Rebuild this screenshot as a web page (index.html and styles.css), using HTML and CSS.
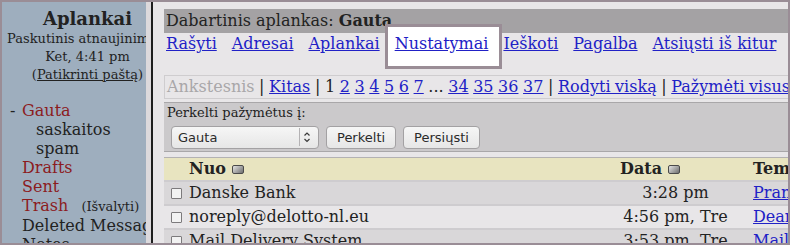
FILE: index.html
```html
<!DOCTYPE html>
<html lang="lt">
<head>
    <meta charset="UTF-8">
    <title>SquirrelMail - Gauta</title>
    <link rel="stylesheet" href="styles.css">
</head>
<body>
<div class="window">
    <aside class="sidebar">
        <div class="sidebar-inner">
            <h1 class="side-title">Aplankai</h1>
            <div class="refresh">
                Paskutinis atnaujinimas:<br>
                Ket, 4:41 pm<br>
                (<a href="#">Patikrinti paštą</a>)
            </div>
            <ul class="folders">
                <li class="folder special"><span class="dash">-</span><a href="#">Gauta</a></li>
                <li class="folder sub"><a href="#">saskaitos</a></li>
                <li class="folder sub"><a href="#">spam</a></li>
                <li class="folder special"><a href="#">Drafts</a></li>
                <li class="folder special"><a href="#">Sent</a></li>
                <li class="folder special"><a href="#">Trash</a><a class="purge" href="#">(Išvalyti)</a></li>
                <li class="folder"><a href="#">Deleted Messages</a></li>
                <li class="folder"><a href="#">Notes</a></li>
            </ul>
        </div>
    </aside>
    <div class="splitter"></div>
    <main class="main">
        <div class="current">Dabartinis aplankas: <b>Gauta</b></div>
        <nav class="menu">
            <a href="#">Rašyti</a>
            <a href="#">Adresai</a>
            <a href="#">Aplankai</a>
            <a href="#" class="active">Nustatymai</a>
            <a href="#">Ieškoti</a>
            <a href="#">Pagalba</a>
            <a href="#">Atsiųsti iš kitur</a>
            <a href="#">Organizatorius</a>
        </nav>

        <div class="paging">
            <span class="disabled">Ankstesnis</span> | <a href="#">Kitas</a> |
            <span>1</span> <a href="#">2</a> <a href="#">3</a> <a href="#">4</a> <a href="#">5</a> <a href="#">6</a> <a href="#">7</a> ...
            <a href="#">34</a> <a href="#">35</a> <a href="#">36</a> <a href="#">37</a> |
            <a href="#">Rodyti viską</a> | <a href="#">Pažymėti visus</a>
        </div>

        <form class="move">
            <div class="move-label">Perkelti pažymėtus į:</div>
            <div class="move-controls">
                <span class="select-wrap">
                    <select class="folder-select">
                        <option>Gauta</option>
                        <option>saskaitos</option>
                        <option>spam</option>
                    </select>
                    <svg class="select-arrows" width="19" height="20" viewBox="0 0 19 20">
                        <line x1="0.5" y1="1" x2="0.5" y2="19" stroke="#b4b2b4"/>
                        <path d="M5.5 8.5 L8 6 L10.5 8.5 M5.5 12 L8 14.5 L10.5 12" fill="none" stroke="#3a3a3a" stroke-width="1.2"/>
                    </svg>
                </span>
                <button type="button" class="btn">Perkelti</button>
                <button type="button" class="btn">Persiųsti</button>
            </div>
        </form>

        <div class="list">
            <div class="row head">
                <span></span>
                <span>Nuo <i class="sort"></i></span>
                <span class="date-head">Data <i class="sort"></i></span>
                <span class="subject">Tema</span>
            </div>
            <div class="row dark">
                <span><i class="check"></i></span>
                <span>Danske Bank</span>
                <span class="date">3:28 pm</span>
                <span class="subject"><a href="#">Pranešimas apie sąskaitą</a></span>
            </div>
            <div class="row light">
                <span><i class="check"></i></span>
                <span>noreply@delotto-nl.eu</span>
                <span class="date">4:56 pm, Tre</span>
                <span class="subject"><a href="#">Dear winner</a></span>
            </div>
            <div class="row dark">
                <span><i class="check"></i></span>
                <span>Mail Delivery System</span>
                <span class="date">3:53 pm, Tre</span>
                <span class="subject"><a href="#">Mail delivery failed</a></span>
            </div>
        </div>
    </main>
</div>
</body>
</html>
```

FILE: styles.css
```css
* {
    box-sizing: border-box;
}

html, body {
    margin: 0;
    padding: 0;
}

body {
    width: 790px;
    height: 245px;
    overflow: hidden;
    font-family: "DejaVu Serif", serif;
    font-size: 16px;
    color: #222;
}

a {
    color: #2121c6;
}

.window {
    display: flex;
    height: 245px;
    border: 2px solid #9a8d96;
    overflow: hidden;
    background: #e8e6e8;
}

/* left frame */
.sidebar {
    flex: 0 0 144px;
    background: #9eaebe;
    overflow: hidden;
}

.sidebar-inner {
    width: 171px;
    padding-top: 6px;
}

.side-title {
    margin: 0;
    font-size: 18px;
    line-height: 22px;
    text-align: center;
}

.refresh {
    font-size: 13px;
    line-height: 18px;
    text-align: center;
    white-space: nowrap;
}

.refresh a {
    color: #222;
}

.folders {
    list-style: none;
    margin: 17px 0 0;
    padding: 0;
    line-height: 19px;
    white-space: nowrap;
}

.folder {
    padding-left: 20px;
}

.folder a {
    color: #222;
    text-decoration: none;
}

.folder.special a {
    color: #8c1c1e;
}

.folder.sub {
    padding-left: 34px;
}

.dash {
    display: inline-block;
    width: 12px;
    margin-left: -12px;
}

.folder .purge {
    margin-left: 13px;
    font-size: 13px;
    color: #222 !important;
}

.splitter {
    flex: 0 0 7px;
    background: #dcd9dc;
    border-right: 2px solid #1e1e1e;
}

/* right frame */
.main {
    flex: 1;
    min-width: 0;
    overflow: hidden;
    padding: 7px 0 0 11px;
}

.current {
    height: 24px;
    line-height: 24px;
    padding-left: 2px;
    background: #a4a2a4;
    white-space: nowrap;
}

.menu {
    display: flex;
    gap: 15px;
    margin-top: 1px;
    padding-left: 2px;
    line-height: 19px;
    white-space: nowrap;
}

.menu a.active {
    position: relative;
    z-index: 1;
}

.menu a.active::before {
    content: "";
    position: absolute;
    left: -10px;
    right: -14px;
    top: -10px;
    bottom: -16px;
    background: #fff;
    border: 3px solid #9a8d96;
    z-index: -1;
}

.paging {
    margin-top: 22px;
    border: 1px solid #cfcdcf;
    border-right: none;
    padding-left: 2px;
    line-height: 22px;
    white-space: nowrap;
    word-spacing: -0.5px;
}

.paging .disabled {
    color: #a9a7a9;
}

.move {
    margin: 3px 0 0;
    background: #cbc9cb;
    border-top: 1px solid #a9a7a9;
    border-bottom: 1px solid #a9a7a9;
    padding: 2px 0 2px 3px;
}

.move-label {
    font-size: 13px;
    line-height: 15px;
}

.move-controls {
    display: flex;
    gap: 7px;
    margin: 6px 0 0 4px;
    font-family: "DejaVu Sans", sans-serif;
    font-size: 13px;
}

.select-wrap {
    position: relative;
    display: inline-block;
}

.folder-select {
    appearance: none;
    -webkit-appearance: none;
    width: 148px;
    height: 23px;
    padding: 0 0 0 6px;
    border: 1px solid #a3a1a3;
    border-radius: 4px;
    background: linear-gradient(#f6f6f6, #e6e6e6);
    font-family: "DejaVu Sans", sans-serif;
    font-size: 13px;
    color: #2a2a2a;
}

.select-arrows {
    position: absolute;
    right: 1px;
    top: 1px;
    pointer-events: none;
}

.btn {
    height: 23px;
    padding: 0 10px;
    border: 1px solid #a3a1a3;
    border-radius: 4px;
    background: linear-gradient(#f6f6f6, #e6e6e6);
    font-family: "DejaVu Sans", sans-serif;
    font-size: 13px;
    color: #2a2a2a;
}

.list {
    margin-top: 5px;
    border-top: 1px solid #b3b1b3;
}

.row {
    display: grid;
    grid-template-columns: 25px 415px 143px 300px;
    white-space: nowrap;
}

.row > span {
    overflow: hidden;
}

.head {
    height: 22px;
    line-height: 22px;
    background: #e8e4c0;
    font-weight: bold;
}

.date-head {
    padding-left: 16px;
}

.subject {
    padding-left: 6px;
}

.row.dark, .row.light {
    height: 24px;
    line-height: 22px;
    border-top: 2px solid #cecccf;
}

.row.dark {
    background: #d9d7d9;
}

.row.light {
    background: #e8e6e8;
}

.date {
    text-align: center;
}

.sort {
    display: inline-block;
    width: 12px;
    height: 9px;
    border: 1px solid #4a4a4a;
    border-radius: 2px;
    background: linear-gradient(135deg, #e4e4e4, #6e6e6e);
}

.check {
    display: inline-block;
    width: 11px;
    height: 11px;
    margin: 6px 0 0 7px;
    border: 1px solid #7c7a7c;
    border-radius: 1px;
    background: #f2f2f2;
    vertical-align: top;
}
```
